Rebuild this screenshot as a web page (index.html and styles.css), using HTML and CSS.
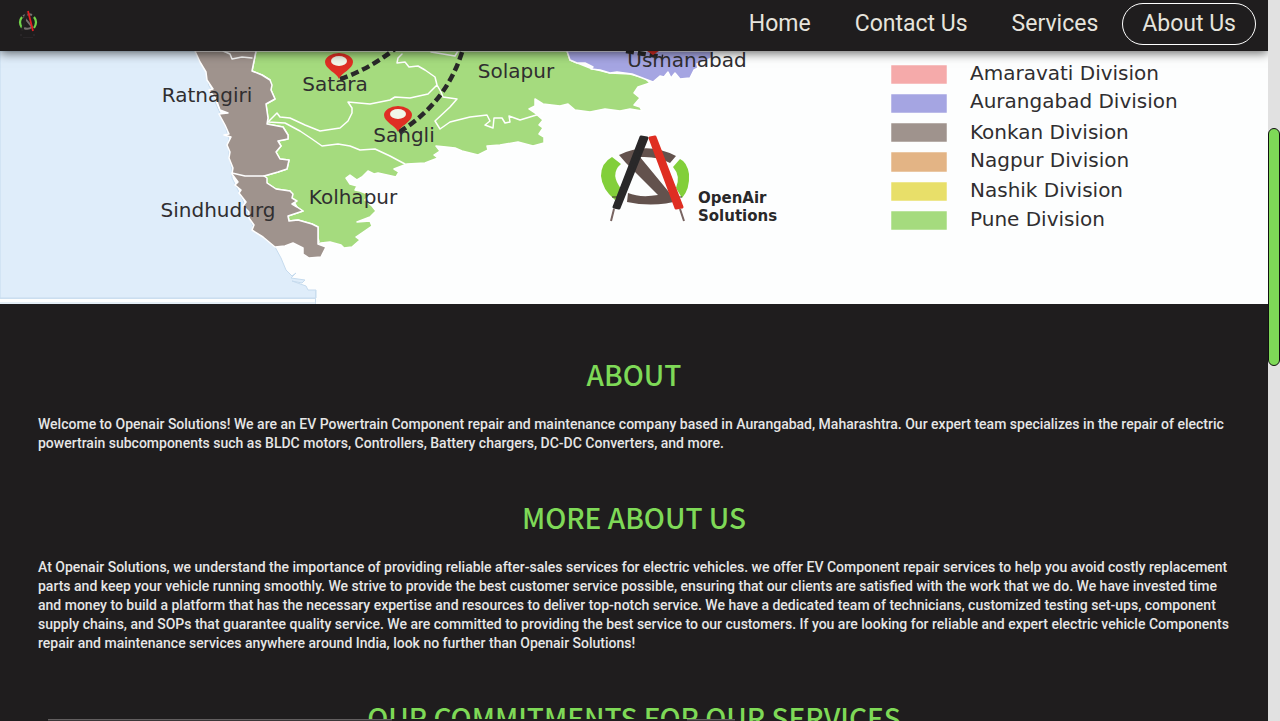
FILE: index.html
```html
<!DOCTYPE html>
<html lang="en">
<head>
<meta charset="utf-8">
<meta name="viewport" content="width=device-width, initial-scale=1">
<title>OpenAir Solutions</title>
<link rel="stylesheet" href="styles.css">
</head>
<body>
<div class="page">
  <header class="topbar">
    <a class="brand" href="#" aria-label="OpenAir Solutions">
      <svg class="brand-mark" viewBox="0 0 20 28" aria-hidden="true">
        <path d="M4 7Q0 12 4 18M16 7Q20 12 16 18" fill="none" stroke="#72d34a" stroke-width="2.2"/>
        <path d="M5 6Q10 3 14 5M6 7L14 17Q10 20 6 18" fill="none" stroke="#77706f" stroke-width="2"/>
        <path d="M9 1L4 21" stroke="#242222" stroke-width="2.6"/>
        <path d="M10 1L15 21" stroke="#e01f22" stroke-width="1.8"/>
        <path d="M3 24V26M16 24V26M5 28H15" stroke="#343132"/>
      </svg>
    </a>
    <nav class="menu" aria-label="Main">
      <a class="menu-link" href="#">Home</a>
      <a class="menu-link" href="#">Contact Us</a>
      <a class="menu-link" href="#">Services</a>
      <a class="menu-link menu-link-current" href="#" aria-current="page">About Us</a>
    </nav>
  </header>
  <main>
    <svg class="map" viewBox="0 51 1268 253" role="img" aria-label="Service area map">
      <rect y="51" width="1268" height="253" fill="#fdfefe"/>
      <path d="M0 51H195L200 62 206 72 209 86 213 92 216 104 220 113 225 125 229 140 229 155 232 170 232 178 239 192 245 205 250 218 254 230 263 237 275 247 281 258 286 270 292 276 296 273 291 278 305 280 302 283 292 281 306 286 308 290H316V298H0Z" fill="#dfedfa" stroke="#c6dbee"/>
      <path d="M0 298.500H316M0 303H316M315.500 290V304" fill="none" stroke="#cbdeef"/>
      <g stroke="#fff" stroke-width="1.500" stroke-linejoin="round" stroke-linecap="round">
        <path fill="#a5db7e" d="M256 51L254 61 252 71 262 75 270 80 271 90 275 99 266 104 268 118 267 124 283 127 288 135 288 139 278 141 281 146 276 152 280 159 289 160 287 169 278 172 264 176 267 183 276 189 290 191 292 198 297 207 303 211 288 216 289 221 298 220 312 224 318 227 318 238 319 242 312 245 312 250 317 251 315 246 321 243 330 242 341 245 344 248 352 247 360 240 356 237 372 226 370 221 357 222 370 217 376 211 372 206 365 200 370 195 360 191 355 190 357 186 350 184 346 178 350 175 357 180 362 177 368 171 374 174 378 173 396 177 399 172 394 169 407 164 425 163 438 158 434 155 440 151 436 146 446 147 455 148 462 151 478 155 488 150 487 146 500 145 518 142 533 146 544 143 544 137 539 134 543 128 539 125 543 120 535 113 529 109 535 106 535 99 543 104 560 106 568 104 575 110 590 112 605 109 620 111 630 109 642 111 640 107 634 105 640 98 634 93 638 87 650 83 645 78 630 74 610 73 590 68 570 60 567 51Z"/>
        <path fill="#9f938d" d="M195 51L200 62 206 72 207 80 213 89 209 90 216 99 220 110 228 113 219 114 225 125 229 134 224 135 231 137 227 145 230 152 229 158 233 168 232 174 238 182 235 185 241 190 239 193 246 202 243 206 249 212 249 218 254 225 252 230 263 237 275 247 285 246 293 243 303 248 303 254 309 258 321 257 326 247 318 244 318 227 312 224 298 220 289 221 288 216 303 211 297 207 292 204 297 201 292 198 293 194 290 191 276 189 267 183 267 178 264 176 278 172 287 169 289 160 280 159 276 152 281 146 278 141 288 139 288 135 283 127 267 124 268 118 266 104 275 99 271 90 272 85 270 80 262 75 252 71 254 61 256 51Z"/>
        <path fill="#a5a5e2" d="M567 51L570 60 577 63 585 63 593 67 591 69 600 70 610 73 617 72 632 74 645 79 653 82 660 76 664 77 668 72 671 78 675 73 680 79 690 78 694 70 698 68 697 64 712 58 714 51Z"/>
        <path fill="none" d="M268 122L277 113 280 117 290 118 305 125 320 131 340 128 348 121 352 113 352 108 348 102 370 104 390 100 395 97 410 98 428 94 437 85 435 77 425 70 418 66 409 67 405 62 397 63 398 58 402 54M268 122L285 123 300 131 312 139 322 146 338 144 350 146 360 150 375 149 390 156 405 164M437 85L441 92 443 97 457 99 450 107 435 121 440 129 450 122 470 117 487 115 490 121 485 125 493 128 494 118 502 118 505 123 510 122 509 116 520 120 543 113M431 52L455 56 458 51M232 173L245 176 264 176M223 51L230 54 232 59 242 57 252 58"/>
      </g>
      <g fill="none" stroke="#292829" stroke-width="4.500" stroke-dasharray="8 4">
        <path d="M340 79Q370 69 396 48"/><path d="M399 132Q447 103 463 49"/><path d="M626 51L663 57"/>
      </g>
      <g class="place">
        <text x="207" y="102">Ratnagiri</text><text x="218" y="217">Sindhudurg</text><text x="335" y="91">Satara</text>
        <text x="404" y="142">Sangli</text><text x="353" y="204">Kolhapur</text><text x="516" y="78">Solapur</text><text x="687" y="67">Usmanabad</text>
      </g>
      <g fill="#df2e24">
        <path d="M339 79C337 73 325 69 325 62A14 9 0 0 1 353 62C353 69 341 73 339 79Z"/>
        <path d="M398 132C396 126 384 122 384 115A14 9 0 0 1 412 115C412 122 400 126 398 132Z"/>
        <path d="M647 51H659L653 55Z"/>
      </g>
      <g fill="#f1f6ea"><ellipse cx="339" cy="61" rx="8" ry="5"/><ellipse cx="398" cy="114" rx="8" ry="5"/></g>
      <path d="M612 157Q601 163 601 176Q602 189 615 200L622 190Q609 174 621 164ZM680 159L673 167Q681 176 676 188L682 198Q690 189 689 174Q687 162 680 159Z" fill="#82cf3a"/>
      <path d="M619 155Q647 141 676 156L670 163Q658 156 640 157L673 197L681 200Q655 208 627 202L628 193Q640 198 658 195L626 163Z" fill="#63524d"/>
      <path d="M614 209L611 221M680 209L684 221" stroke="#796562" stroke-width="2"/>
      <path d="M612 197H622M674 197H682" stroke="#443433"/>
      <path d="M641 137L647 138L619 208L614 207Z" fill="#292829" stroke="#292829" stroke-width="3" stroke-linejoin="round"/>
      <path d="M650 138L655 137L682 207L676 208Z" fill="#df2e22" stroke="#df2e22" stroke-width="3" stroke-linejoin="round"/>
      <g class="wordmark"><text x="698" y="203">OpenAir</text><text x="698" y="221">Solutions</text></g>
      <g stroke="#fff" stroke-opacity=".5">
        <path fill="#f5aaaa" d="M891 65H947V84H891Z"/><path fill="#a5a5e2" d="M891 94H947V113H891Z"/><path fill="#9f938d" d="M891 123H947V142H891Z"/>
        <path fill="#e3b485" d="M891 152H947V172H891Z"/><path fill="#e8df69" d="M891 182H947V201H891Z"/><path fill="#a5db7e" d="M891 211H947V230H891Z"/>
      </g>
      <g class="key">
        <text x="970" y="80">Amaravati Division</text><text x="970" y="108">Aurangabad Division</text><text x="970" y="139">Konkan Division</text>
        <text x="970" y="167">Nagpur Division</text><text x="970" y="197">Nashik Division</text><text x="970" y="226">Pune Division</text>
      </g>
    </svg>
    <section class="block">
      <h2 class="title">ABOUT</h2>
      <p class="copy">Welcome to Openair Solutions! We are an EV Powertrain Component repair and maintenance company based in Aurangabad, Maharashtra. Our expert team specializes in the repair of electric<br>powertrain subcomponents such as BLDC motors, Controllers, Battery chargers, DC-DC Converters, and more.</p>
    </section>
    <section class="block">
      <h2 class="title">MORE ABOUT US</h2>
      <p class="copy">At Openair Solutions, we understand the importance of providing reliable after-sales services for electric vehicles. we offer EV Component repair services to help you avoid costly replacement<br>parts and keep your vehicle running smoothly. We strive to provide the best customer service possible, ensuring that our clients are satisfied with the work that we do. We have invested time<br>and money to build a platform that has the necessary expertise and resources to deliver top-notch service. We have a dedicated team of technicians, customized testing set-ups, component<br>supply chains, and SOPs that guarantee quality service. We are committed to providing the best service to our customers. If you are looking for reliable and expert electric vehicle Components<br>repair and maintenance services anywhere around India, look no further than Openair Solutions!</p>
    </section>
    <section class="block">
      <h2 class="title">OUR COMMITMENTS FOR OUR SERVICES</h2>
    </section>
  </main>
</div>
<div class="track"><div class="thumb"></div></div>
<div class="status"><span class="status-part status-wide"></span><span class="status-part status-short"></span></div>
</body>
</html>
```
FILE: styles.css
```css
* { box-sizing: border-box; }
body {
  margin: 0;
  height: 100vh;
  overflow: hidden;
  display: grid;
  grid-template-columns: minmax(0, 1fr) 12px;
  background: #1f1d1e;
  color: #e6e6e6;
  font-family: Roboto, "Liberation Sans", sans-serif;
}
.page { height: 100vh; overflow: hidden; }
.topbar {
  position: relative;
  z-index: 1;
  display: flex;
  align-items: center;
  justify-content: space-between;
  height: 51px;
  padding: 0 12px 3px 18px;
  background: #1f1d1e;
  box-shadow: 0 2px 10px rgba(0, 0, 0, .6);
}
.brand { display: flex; }
.brand-mark { width: 20px; height: 28px; }
.menu { display: flex; gap: 4px; }
.menu-link {
  padding: 0 19px;
  border: 1px solid transparent;
  border-radius: 21px;
  color: #e6e4dd;
  font-size: 23px;
  line-height: 40px;
  text-decoration: none;
}
.menu-link-current { border-color: #fff; }
.map { display: block; width: 100%; height: auto; overflow: visible; }
.place, .key { fill: #302e30; font-family: "DejaVu Sans", sans-serif; font-size: 20px; }
.place { text-anchor: middle; }
.wordmark { fill: #292829; font-family: "DejaVu Sans", sans-serif; font-weight: 700; font-size: 15px; }
.block { padding: 46px 38px 0; }
.block + .block { padding-top: 40px; }
.title {
  margin: 0 0 17px;
  color: #7ed957;
  font-family: "Noto Sans CJK SC", sans-serif;
  font-size: 28px;
  font-weight: 500;
  line-height: 48px;
  text-align: center;
}
.copy { margin: 0; font-size: 14px; line-height: 19px; font-weight: 500; white-space: nowrap; }
.track { background: #e1e1e1; padding-top: 128px; }
.thumb { height: 238px; border: 1px solid #111; border-radius: 6px; background: #7ed957; }
.status {
  position: absolute;
  left: 48px;
  bottom: 0;
  width: 687px;
  height: 2px;
  display: flex;
  justify-content: space-between;
  background: #1f1d1e;
}
.status-part { height: 2px; background: #3a3738; border-top: 1px solid #625f60; }
.status-wide { width: 344px; }
.status-short { width: 48px; }
```
